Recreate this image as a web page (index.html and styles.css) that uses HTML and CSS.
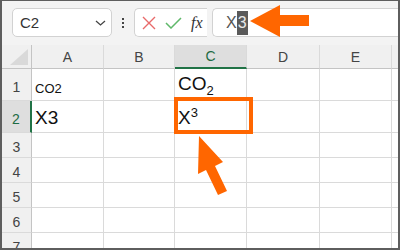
FILE: index.html
```html
<!DOCTYPE html>
<html lang="ja">
<head>
    <meta charset="UTF-8">
    <title>Superscript in Excel</title>
    <link rel="stylesheet" href="styles.css">
</head>
<body>
    <div class="frame">
        <div class="toolbar">
            <div class="name-box">
                <span>C2</span>
                <svg class="chevron" width="11" height="6" viewBox="0 0 11 6"><path d="M1 1 L5.5 5 L10 1" fill="none" stroke="#444" stroke-width="1.3"/></svg>
            </div>
            <div class="dots"><i></i><i></i><i></i></div>
            <div class="func-box">
                <svg width="14" height="14" viewBox="0 0 14 14"><path d="M1 1 L13 13 M13 1 L1 13" stroke="#e86a6a" stroke-width="1.4"/></svg>
                <svg width="17" height="12" viewBox="0 0 17 12"><path d="M1 6 L6 11 L16 1" fill="none" stroke="#5fb86a" stroke-width="1.5"/></svg>
                <span class="fx">fx</span>
            </div>
            <div class="formula-box">
                <span class="formula-text">X<span class="sel">3</span></span>
            </div>
        </div>

        <div class="sheet">
            <div class="hd corner">
                <svg width="18" height="16" viewBox="0 0 18 16"><path d="M18 0 L18 16 L0 16 Z" fill="#d9d9d9"/></svg>
            </div>
            <div class="hd col">A</div>
            <div class="hd col">B</div>
            <div class="hd col active">C</div>
            <div class="hd col">D</div>
            <div class="hd col">E</div>
            <div class="hd col"></div>

            <div class="hd row">1</div>
            <div class="cell small"><span>CO2</span></div>
            <div class="cell"></div>
            <div class="cell big"><span>CO<sub>2</sub></span></div>
            <div class="cell"></div>
            <div class="cell"></div>
            <div class="cell"></div>

            <div class="hd row active">2</div>
            <div class="cell big low"><span>X3</span></div>
            <div class="cell"></div>
            <div class="cell big low"><span>X<sup>3</sup></span></div>
            <div class="cell"></div>
            <div class="cell"></div>
            <div class="cell"></div>

            <div class="hd row">3</div>
            <div class="cell"></div><div class="cell"></div><div class="cell"></div><div class="cell"></div><div class="cell"></div><div class="cell"></div>
            <div class="hd row">4</div>
            <div class="cell"></div><div class="cell"></div><div class="cell"></div><div class="cell"></div><div class="cell"></div><div class="cell"></div>
            <div class="hd row">5</div>
            <div class="cell"></div><div class="cell"></div><div class="cell"></div><div class="cell"></div><div class="cell"></div><div class="cell"></div>
            <div class="hd row">6</div>
            <div class="cell"></div><div class="cell"></div><div class="cell"></div><div class="cell"></div><div class="cell"></div><div class="cell"></div>
            <div class="hd row">7</div>
            <div class="cell"></div><div class="cell"></div><div class="cell"></div><div class="cell"></div><div class="cell"></div><div class="cell"></div>
        </div>

        <!-- annotations -->
        <div class="highlight"></div>
        <svg class="arrow-top" width="62" height="34" viewBox="0 0 62 34">
            <path d="M0 18 L30 2 L30 12 L59 12 L59 23 L30 23 L30 34 Z" fill="#ff6600"/>
        </svg>
        <svg class="arrow-up" width="34" height="62" viewBox="0 0 34 62">
            <path d="M2 1 L26 27 L18 31 L30 56 L21 60 L9 35 L1 39 Z" fill="#ff6600"/>
        </svg>
    </div>
</body>
</html>
```

FILE: styles.css
```css
body {
    margin: 0;
    font-family: "Liberation Sans", Arial, sans-serif;
}
.frame {
    position: relative;
    width: 400px;
    height: 250px;
    box-sizing: border-box;
    border: 2px solid #5e5e5e;
    border-top-width: 1px;
    background-color: #f3f3f3;
    overflow: hidden;
}
.toolbar {
    display: flex;
    align-items: center;
    height: 29px;
    margin-top: 7px;
    padding-left: 10px;
}
.name-box {
    display: flex;
    align-items: center;
    justify-content: space-between;
    box-sizing: border-box;
    width: 100px;
    height: 29px;
    padding: 0 5px 0 7px;
    background-color: #fff;
    border: 1px solid #d2d2d2;
    border-radius: 5px;
    font-size: 15px;
    color: #333;
}
.dots {
    display: flex;
    flex-direction: column;
    gap: 2px;
    width: 22px;
    align-items: center;
}
.dots i {
    width: 2px;
    height: 2px;
    background-color: #444;
}
.func-box {
    display: flex;
    align-items: center;
    gap: 9px;
    box-sizing: border-box;
    width: 73px;
    height: 29px;
    padding-left: 7px;
    background-color: #fff;
    border: 1px solid #d2d2d2;
    border-radius: 5px 0 0 5px;
    border-right: none;
}
.fx {
    font-family: "Liberation Serif", serif;
    font-style: italic;
    font-size: 16px;
    color: #333;
}
.formula-box {
    flex: 1;
    display: flex;
    align-items: center;
    box-sizing: border-box;
    height: 29px;
    margin-left: 5px;
    padding-left: 13px;
    background-color: #fff;
    border: 1px solid #d2d2d2;
    border-right: none;
    border-radius: 5px 0 0 5px;
}
.formula-text {
    font-size: 16px;
    color: #555;
}
.sel {
    display: inline-block;
    padding: 0 1px;
    line-height: 24px;
    background-color: #5a5a5a;
    color: #e8e8e8;
}
.sheet {
    display: grid;
    grid-template-columns: 30px 72px 71px 72px 73px 72px 20px;
    grid-template-rows: 24px 32px 32px 25px 25px 25px 25px 25px;
    margin-top: 8px;
}
.hd {
    box-sizing: border-box;
    display: flex;
    align-items: center;
    justify-content: center;
    background-color: #f0f0f0;
    color: #444;
    font-size: 14px;
}
.hd.col {
    border-right: 1px solid #dadada;
    border-bottom: 1px solid #c4c4c4;
}
.hd.col.active {
    background-color: #dedede;
    color: #1d6b44;
    border-bottom: 2px solid #217346;
}
.hd.row {
    border-right: 1px solid #c4c4c4;
    border-bottom: 1px solid #dadada;
    padding-top: 4px;
}
.hd.row.active {
    background-color: #dedede;
    color: #1d6b44;
    border-right: 2px solid #217346;
}
.corner {
    align-items: flex-end;
    justify-content: flex-end;
    padding: 0 3px 3px 0;
    border-right: 1px solid #c4c4c4;
    border-bottom: 1px solid #c4c4c4;
}
.cell {
    box-sizing: border-box;
    display: flex;
    align-items: flex-end;
    padding: 0 0 3px 3px;
    background-color: #fff;
    border-right: 1px solid #dadada;
    border-bottom: 1px solid #dadada;
    color: #111;
}
.cell.small {
    font-size: 13px;
    padding-bottom: 4px;
}
.cell.big {
    font-size: 19px;
    line-height: 19px;
    padding-bottom: 7px;
}
.cell.low {
    padding-bottom: 5px;
}
.cell sub, .cell sup {
    font-size: 13px;
    line-height: 0;
}
.highlight {
    position: absolute;
    left: 172px;
    top: 96px;
    width: 71px;
    height: 29px;
    border: 4px solid #ff6600;
}
.arrow-top {
    position: absolute;
    left: 248px;
    top: 2px;
}
.arrow-up {
    position: absolute;
    left: 195px;
    top: 134px;
}
```
